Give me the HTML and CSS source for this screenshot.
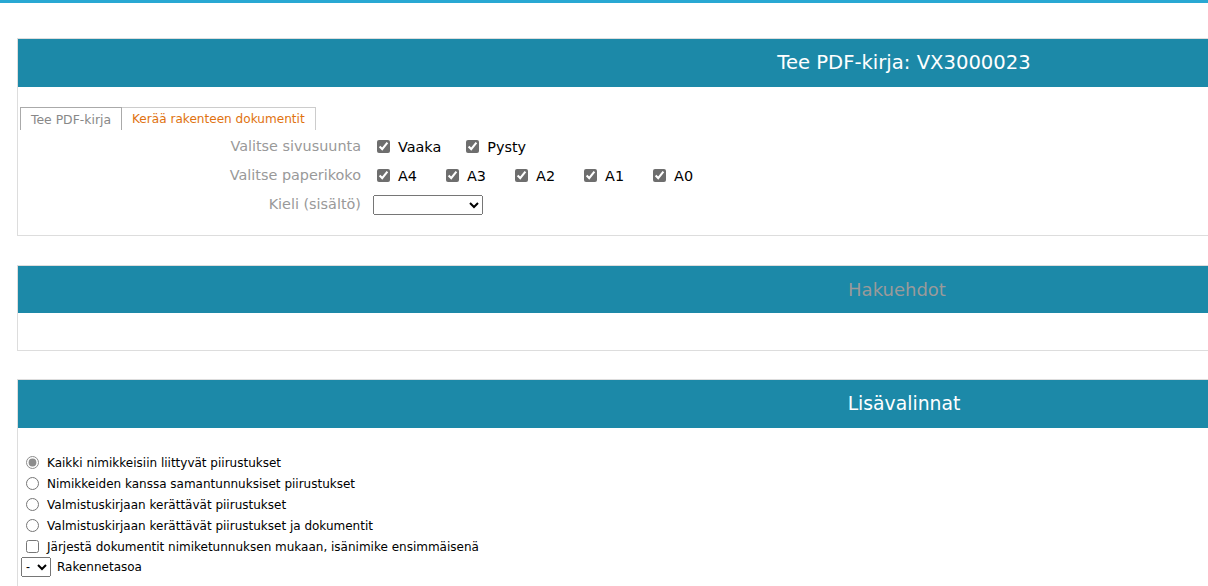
FILE: index.html
```html
<!DOCTYPE html>
<html>
  <head>
    <title>Tee PDF-kirja</title>
    <link rel="stylesheet" href="styles.css">
  </head>
  <body>
    <div class="page">
      <div class="panel panel-first">
        <div class="panel-head title-head">Tee PDF-kirja: VX3000023</div>
        <div class="panel-body first-body">
          <div class="tabs">
            <span class="tab tab-active">Tee PDF-kirja</span>
            <span class="tab tab-link">Kerää rakenteen dokumentit</span>
          </div>

          <div class="form">
            <div class="form-label">Valitse sivusuunta</div>
            <div class="form-control">
              <label class="check"><input type="checkbox" checked> Vaaka</label>
              <label class="check"><input type="checkbox" checked> Pysty</label>
            </div>

            <div class="form-label">Valitse paperikoko</div>
            <div class="form-control">
              <label class="check size"><input type="checkbox" checked> A4</label>
              <label class="check size"><input type="checkbox" checked> A3</label>
              <label class="check size"><input type="checkbox" checked> A2</label>
              <label class="check size"><input type="checkbox" checked> A1</label>
              <label class="check size"><input type="checkbox" checked> A0</label>
            </div>

            <div class="form-label">Kieli (sisältö)</div>
            <div class="form-control">
              <select class="lang-select">
                <option></option>
              </select>
            </div>
          </div>
        </div>
      </div>

      <div class="panel">
        <div class="panel-head muted">Hakuehdot</div>
        <div class="panel-body empty-body"></div>
      </div>

      <div class="panel">
        <div class="panel-head">Lisävalinnat</div>
        <div class="panel-body options">
          <label class="option"><input type="radio" name="draw" class="gray-radio" checked> Kaikki nimikkeisiin liittyvät piirustukset</label>
          <label class="option"><input type="radio" name="draw"> Nimikkeiden kanssa samantunnuksiset piirustukset</label>
          <label class="option"><input type="radio" name="draw"> Valmistuskirjaan kerättävät piirustukset</label>
          <label class="option"><input type="radio" name="draw"> Valmistuskirjaan kerättävät piirustukset ja dokumentit</label>
          <label class="option"><input type="checkbox" class="plain-check"> Järjestä dokumentit nimiketunnuksen mukaan, isänimike ensimmäisenä</label>
          <div class="level">
            <select class="level-select">
              <option>-</option>
            </select>
            Rakennetasoa
          </div>
        </div>
      </div>
    </div>
  </body>
</html>
```

FILE: styles.css
```css
body {
  margin: 0;
  font-family: "DejaVu Sans", Verdana, sans-serif;
  background-color: white;
  border-top: 3px solid #29a8d3;
}
.page {
  padding: 35px 0 0 17px;
  width: 1780px;
}
.panel {
  border: 1px solid #dddddd;
  width: 1772px;
  margin-bottom: 28px;
}
.panel-first {
  margin-bottom: 29px;
}
.panel-head {
  background-color: #1c89a8;
  color: white;
  height: 48px;
  line-height: 48px;
  font-size: 18.8px;
  text-align: center;
}
.title-head {
  font-size: 19.6px;
}
.panel-head.muted {
  color: #9a9a9a;
  font-size: 18px;
  height: 47px;
  line-height: 47px;
  padding-right: 14px;
}
.first-body {
  padding: 20px 0 16px 2px;
}
.empty-body {
  height: 37px;
}
.tabs {
  display: flex;
  height: 23px;
  margin-bottom: 2px;
}
.tab {
  font-size: 12.4px;
  padding: 0 10px;
  line-height: 23px;
  border: 1px solid #cccccc;
  border-bottom: none;
}
.tab-active {
  color: #888888;
  border-color: #aaaaaa;
}
.tab-link {
  color: #e0720f;
  border-left: none;
  font-size: 12.1px;
}
.form {
  display: grid;
  grid-template-columns: 341px 1fr;
  column-gap: 12px;
  font-size: 14.4px;
}
.form-label {
  color: #999999;
  text-align: right;
  height: 29px;
  line-height: 29px;
}
.form-control {
  display: flex;
  align-items: center;
  color: black;
}
.check {
  display: flex;
  align-items: center;
  margin-right: 21px;
}
.check input {
  margin: 0 8px 0 4px;
  accent-color: #6e6e6e;
}
.size {
  margin-right: 25px;
}
.lang-select {
  width: 110px;
  height: 20px;
  font-size: 12px;
}
.options {
  padding: 24px 0 10px 3px;
  font-size: 12px;
}
.option {
  display: flex;
  align-items: center;
  height: 21px;
}
.option input {
  margin: 0 8px 0 5px;
}
.gray-radio {
  accent-color: #8c8c8c;
}
.level {
  display: flex;
  align-items: center;
  gap: 6px;
  height: 20px;
}
.level-select {
  width: 30px;
  height: 20px;
  font-size: 12px;
}
```
